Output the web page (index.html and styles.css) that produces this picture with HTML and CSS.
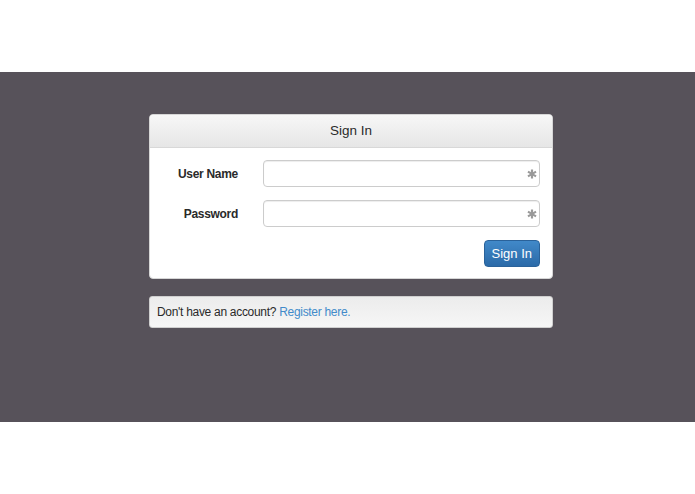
FILE: index.html
```html
<!DOCTYPE html>
<html lang="en">
<head>
<meta charset="UTF-8">
<meta name="viewport" content="width=device-width, initial-scale=1.0">
<title>Sign In</title>
<link rel="stylesheet" href="styles.css">
</head>
<body>
<div class="top"></div>
<div class="band">
    <div class="wrap">
        <div class="panel">
            <div class="panel-heading">Sign In</div>
            <form class="panel-body" onsubmit="return false;">
                <label for="userName">User Name</label>
                <div class="field">
                    <input type="text" id="userName">
                    <svg class="req" viewBox="0 0 12 12" width="10" height="10"><g stroke="#999" stroke-width="2.6"><line x1="6" y1="0.5" x2="6" y2="11.5"/><line x1="1.2" y1="3.2" x2="10.8" y2="8.8"/><line x1="1.2" y1="8.8" x2="10.8" y2="3.2"/></g></svg>
                </div>
                <label for="password">Password</label>
                <div class="field">
                    <input type="password" id="password">
                    <svg class="req" viewBox="0 0 12 12" width="10" height="10"><g stroke="#999" stroke-width="2.6"><line x1="6" y1="0.5" x2="6" y2="11.5"/><line x1="1.2" y1="3.2" x2="10.8" y2="8.8"/><line x1="1.2" y1="8.8" x2="10.8" y2="3.2"/></g></svg>
                </div>
                <div class="actions">
                    <button type="submit">Sign In</button>
                </div>
            </form>
        </div>
        <div class="well">Don't have an account? <a href="#">Register here.</a></div>
    </div>
</div>
</body>
</html>
```

FILE: styles.css
```css
body {
    font-family: "Liberation Sans", Arial, sans-serif;
    font-size: 12px;
    letter-spacing: -0.3px;
    color: #2a2a2a;
    margin: 0;
    background-color: #fff;
}

.top {
    height: 72px;
}

.band {
    background-color: #57525a;
    height: 350px;
    box-sizing: border-box;
    padding: 42px 0 0 7px;
}

.wrap {
    width: 404px;
    margin: 0 auto;
}

.panel {
    background-color: #fff;
    border: 1px solid #d6d6d6;
    border-radius: 4px;
    overflow: hidden;
}

.panel-heading {
    height: 32px;
    line-height: 32px;
    text-align: center;
    font-size: 13.5px;
    letter-spacing: 0;
    background: linear-gradient(to bottom, #f7f7f7, #e6e6e6);
    border-bottom: 1px solid #d8d8d8;
}

.panel-body {
    display: grid;
    grid-template-columns: 88px 1fr;
    column-gap: 25px;
    row-gap: 13px;
    align-items: center;
    padding: 12px 12px 11px 0;
    margin: 0;
}

label {
    text-align: right;
    font-weight: bold;
}

.field {
    position: relative;
}

input {
    display: block;
    width: 100%;
    height: 27px;
    box-sizing: border-box;
    border: 1px solid #ccc;
    border-radius: 4px;
    box-shadow: inset 0 1px 1px rgba(0, 0, 0, 0.075);
    padding: 4px 24px 4px 8px;
    font-family: inherit;
    font-size: 13px;
}

.req {
    position: absolute;
    right: 3px;
    top: 9px;
}

.actions {
    grid-column: 2;
    display: flex;
    justify-content: flex-end;
}

button {
    height: 27px;
    padding: 0 7px;
    font-family: inherit;
    font-size: 13px;
    letter-spacing: 0;
    color: #fff;
    background: linear-gradient(to bottom, #4189c9, #2b6aa8);
    border: 1px solid #2a629a;
    border-radius: 4px;
    cursor: pointer;
}

.well {
    margin-top: 17px;
    height: 32px;
    line-height: 31px;
    box-sizing: border-box;
    padding: 0 7px;
    background: linear-gradient(to bottom, #ececec, #f6f6f6);
    border: 1px solid #cfcfcf;
    border-radius: 3px;
}

.well a {
    color: #428bca;
    text-decoration: none;
}
```
